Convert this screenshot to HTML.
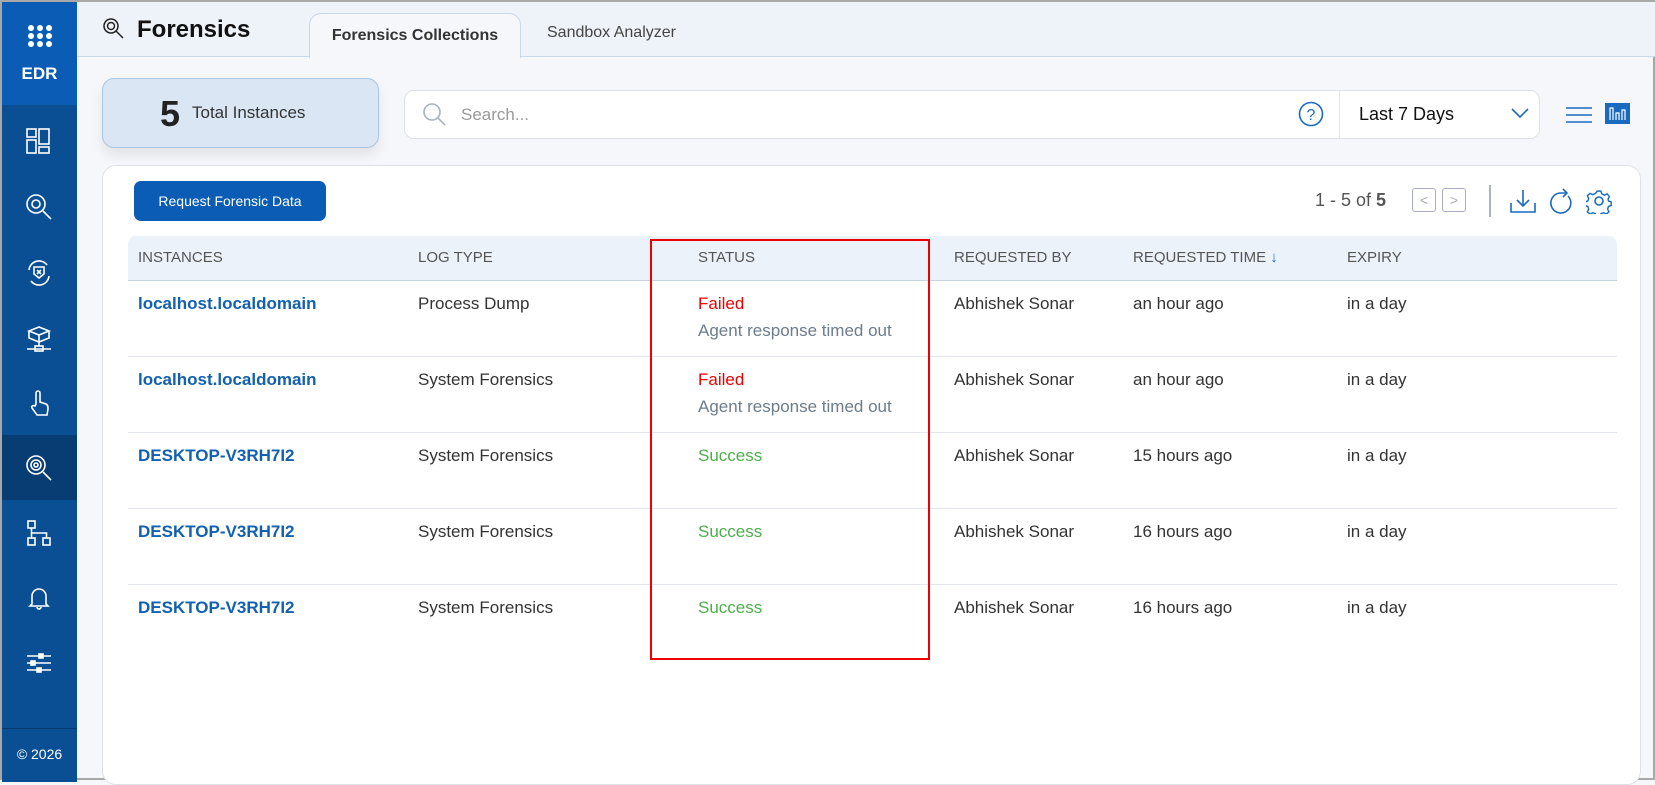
<!DOCTYPE html>
<html><head><meta charset="utf-8"><style>
*{box-sizing:border-box;margin:0;padding:0}
body{width:1655px;height:780px;overflow:hidden;background:#f5f7fa;font-family:"Liberation Sans",sans-serif;position:relative;border:2px solid #a8a8a8}
.abs{position:absolute}
.side{left:0;top:0;width:75px;height:780px;background:#0a4f93}
.edr{left:0;top:0;width:75px;height:103px;background:#0a5cb5;color:#fff;font-weight:bold;font-size:17px;text-align:center}
.ico{left:22px;width:30px;height:30px}
.foot{left:0;top:726px;width:75px;height:54px;border-top:1px solid #0a3a70;color:#fff;font-size:14px;text-align:center;line-height:50px}
.hdr{left:75px;top:0;width:1580px;height:55px;background:#eef3f9;border-bottom:1px solid #c9d8ea}
.tab{left:307px;top:11px;width:212px;height:45px;background:#f5f7fa;border:1px solid #c9d8ea;border-bottom:none;border-radius:12px 12px 0 0;font-weight:bold;font-size:16px;color:#333;text-align:center;line-height:44px}
.row{position:absolute;left:126px;width:1489px;height:76px;border-bottom:1px solid #e3e7ec;font-size:17px;color:#333}
.row span{position:absolute;top:13px}
.c1{left:10px;color:#1260b0;font-weight:bold}.c2{left:290px}.c3{left:570px}.c4{left:826px}.c5{left:1005px}.c6{left:1219px}
.sub{top:40px!important;color:#6b7c8c}
</style></head><body>
<div class="abs side"></div>
<div class="abs edr"><svg class="abs" style="left:25px;top:22px" width="26" height="24"><g fill="#fff"><circle cx="4" cy="4" r="3"/><circle cx="13" cy="4" r="3"/><circle cx="22" cy="4" r="3"/><circle cx="4" cy="12" r="3"/><circle cx="13" cy="12" r="3"/><circle cx="22" cy="12" r="3"/><circle cx="4" cy="20" r="3"/><circle cx="13" cy="20" r="3"/><circle cx="22" cy="20" r="3"/></g></svg><div class="abs" style="left:0;width:75px;top:62px">EDR</div></div>
<svg class="abs ico" style="top:124px" viewBox="0 0 30 30" fill="none" stroke="#fff" stroke-width="1.6"><rect x="3" y="3" width="9" height="8"/><rect x="3" y="14" width="9" height="13"/><rect x="15" y="3" width="10" height="15"/><rect x="15" y="21" width="10" height="6"/></svg>
<svg class="abs ico" style="top:190px" viewBox="0 0 30 30" fill="none" stroke="#fff" stroke-width="1.6"><circle cx="12" cy="12" r="9"/><circle cx="12" cy="12" r="4"/><path d="M19 19l8 8"/></svg>
<svg class="abs ico" style="top:256px" viewBox="0 0 30 30" fill="none" stroke="#fff" stroke-width="1.6"><path d="M5 12a10 10 0 0 1 18-5M25 18a10 10 0 0 1-18 5"/><path d="M10 9h10v7l-5 4-5-4z"/><path d="M13 12l4 4M17 12l-4 4"/></svg>
<svg class="abs ico" style="top:322px" viewBox="0 0 30 30" fill="none" stroke="#fff" stroke-width="1.6"><path d="M15 3l10 4-10 4-10-4z M5 7v7l10 4 10-4V7 M15 11v7 M15 18v4 M3 25h24"/><rect x="11" y="22" width="8" height="5"/></svg>
<svg class="abs ico" style="top:386px" viewBox="0 0 30 30" fill="none" stroke="#fff" stroke-width="1.6"><path d="M12 16V5a2 2 0 0 1 4 0v9l6 2c2 1 2 3 2 5l-1 6H13l-5-7c-1-2 1-3 3-2z"/></svg>
<div class="abs" style="left:0;top:433px;width:75px;height:65px;background:#083d73"></div>
<svg class="abs ico" style="top:451px" viewBox="0 0 30 30" fill="none" stroke="#fff" stroke-width="1.6"><circle cx="12" cy="12" r="9"/><circle cx="12" cy="12" r="5"/><circle cx="12" cy="12" r="2"/><path d="M19 19l8 8"/></svg>
<svg class="abs ico" style="top:516px" viewBox="0 0 30 30" fill="none" stroke="#fff" stroke-width="1.6"><rect x="4" y="3" width="7" height="7"/><rect x="4" y="20" width="7" height="7"/><rect x="19" y="20" width="7" height="7"/><path d="M7.5 10v10M7.5 15h15v5"/></svg>
<svg class="abs ico" style="top:580px" viewBox="0 0 30 30" fill="none" stroke="#fff" stroke-width="1.6"><path d="M8 22V14a7 7 0 0 1 14 0v8l2 2H6z M13 25a2 2 0 0 0 4 0"/></svg>
<svg class="abs ico" style="top:646px" viewBox="0 0 30 30" fill="#fff" stroke="#fff" stroke-width="1.6"><path d="M3 8h24M3 15h24M3 22h24"/><rect x="15" y="6" width="4" height="4"/><rect x="7" y="13" width="4" height="4"/><rect x="13" y="20" width="4" height="4"/></svg>
<div class="abs foot">© 2026</div>
<div class="abs hdr"></div>
<svg class="abs" style="left:100px;top:15px" width="24" height="24" viewBox="0 0 24 24" fill="none" stroke="#222" stroke-width="1.5"><circle cx="9" cy="9" r="7"/><circle cx="9" cy="9" r="3.5"/><path d="M14 14l7 7"/></svg>
<div class="abs" style="left:135px;top:14px;font-size:24px;font-weight:bold;color:#111">Forensics</div>
<div class="abs tab">Forensics Collections</div>
<div class="abs" style="left:545px;top:22px;font-size:16px;color:#444">Sandbox Analyzer</div>
<div class="abs" style="left:100px;top:76px;width:277px;height:70px;background:#dae6f3;border:1px solid #a9c6e5;border-radius:12px;box-shadow:0 8px 12px rgba(0,0,0,.08)"><span class="abs" style="left:57px;top:14px;font-size:36px;font-weight:bold;color:#222">5</span><span class="abs" style="left:89px;top:24px;font-size:17px;color:#333">Total Instances</span></div>
<div class="abs" style="left:402px;top:88px;width:1136px;height:49px;background:#fff;border:1px solid #dde2e8;border-radius:10px"></div>
<svg class="abs" style="left:419px;top:99px" width="26" height="26" fill="none" stroke="#aab3bd" stroke-width="1.6"><circle cx="11" cy="11" r="8"/><path d="M17 17l7 7"/></svg>
<div class="abs" style="left:459px;top:103px;font-size:17px;color:#999">Search...</div>
<svg class="abs" style="left:1296px;top:99px" width="26" height="26" fill="none" stroke="#1a6bc0" stroke-width="1.6"><circle cx="13" cy="13" r="11.5"/><text x="13" y="19" text-anchor="middle" font-size="16" fill="#1a6bc0" stroke="none" font-family="Liberation Sans">?</text></svg>
<div class="abs" style="left:1337px;top:89px;width:1px;height:47px;background:#e3e7ec"></div>
<div class="abs" style="left:1357px;top:102px;font-size:18px;color:#111">Last 7 Days</div>
<svg class="abs" style="left:1509px;top:105px" width="18" height="12" fill="none" stroke="#1a6bc0" stroke-width="1.6"><path d="M1 2l8 8 8-8"/></svg>
<svg class="abs" style="left:1564px;top:104px" width="26" height="18" stroke="#1a6bc0" stroke-width="1.6"><path d="M0 2h26M0 9h26M0 16h26"/></svg>
<svg class="abs" style="left:1603px;top:101px" width="25" height="21"><rect width="25" height="21" fill="#1a6bc0"/><path d="M5 17V5h3v12M11 17V10h3v7M17 17V7h3v10" stroke="#fff" stroke-width="1.2" fill="none"/></svg>
<div class="abs" style="left:100px;top:163px;width:1539px;height:620px;background:#fff;border:1px solid #dde2e8;border-radius:14px"></div>
<div class="abs" style="left:132px;top:179px;width:192px;height:40px;background:#0a5cb5;border-radius:7px;color:#fff;font-size:14px;text-align:center;line-height:40px">Request Forensic Data</div>
<div class="abs" style="left:1313px;top:188px;font-size:18px;color:#555">1 - 5 of <b>5</b></div>
<div class="abs" style="left:1410px;top:186px;width:24px;height:24px;border:1px solid #aac;border-radius:3px;color:#aab;font-size:14px;text-align:center;line-height:22px">&lt;</div>
<div class="abs" style="left:1440px;top:186px;width:24px;height:24px;border:1px solid #aac;border-radius:3px;color:#aab;font-size:14px;text-align:center;line-height:22px">&gt;</div>
<div class="abs" style="left:1487px;top:183px;width:2px;height:32px;background:#aab4bf"></div>
<svg class="abs" style="left:1508px;top:186px" width="26" height="26" fill="none" stroke="#1a6bc0" stroke-width="1.6"><path d="M1 15v9h24v-9M13 2v16M7 12l6 6 6-6"/></svg>
<svg class="abs" style="left:1546px;top:186px" width="26" height="28" fill="none" stroke="#1a6bc0" stroke-width="1.6"><path d="M20 8a10 10 0 1 1-8-3h6M15 1l4 4-4 4"/></svg>
<svg class="abs" style="left:1584px;top:186px" width="26" height="26" viewBox="0 0 26 26" fill="none" stroke="#1a6bc0" stroke-width="1.6"><circle cx="13" cy="13" r="4"/><path d="M11 2h4l1 3 3 1.5 3-1.5 2.5 3-1.5 3 .5 2 3 1v4l-3 1-1 3 1.5 3-3 2.5-3-1.5-3 1-1 3h-4l-1-3-3-1-3 1.5-3-2.5 1.5-3-1-3-3-1v-4l3-1 1-3-1.5-3 3-2.5 3 1.5 3-1.5z" transform="scale(.9) translate(1.5 1.5)"/></svg>
<div class="abs" style="left:126px;top:234px;width:1489px;height:45px;background:#ecf2f9;border-bottom:1px solid #c4d3e4;border-radius:8px 8px 0 0;font-size:15px;color:#555">
<span class="abs" style="left:10px;top:13px">INSTANCES</span><span class="abs" style="left:290px;top:13px">LOG TYPE</span><span class="abs" style="left:570px;top:13px">STATUS</span><span class="abs" style="left:826px;top:13px">REQUESTED BY</span><span class="abs" style="left:1005px;top:13px">REQUESTED TIME <span style="color:#1a6bc0">↓</span></span><span class="abs" style="left:1219px;top:13px">EXPIRY</span></div>
<div class="row" style="top:279px"><span class="c1">localhost.localdomain</span><span class="c2">Process Dump</span><span class="c3" style="color:#e00">Failed</span><span class="c3 sub">Agent response timed out</span><span class="c4">Abhishek Sonar</span><span class="c5">an hour ago</span><span class="c6">in a day</span></div>
<div class="row" style="top:355px"><span class="c1">localhost.localdomain</span><span class="c2">System Forensics</span><span class="c3" style="color:#e00">Failed</span><span class="c3 sub">Agent response timed out</span><span class="c4">Abhishek Sonar</span><span class="c5">an hour ago</span><span class="c6">in a day</span></div>
<div class="row" style="top:431px"><span class="c1">DESKTOP-V3RH7I2</span><span class="c2">System Forensics</span><span class="c3" style="color:#4cae4c">Success</span><span class="c4">Abhishek Sonar</span><span class="c5">15 hours ago</span><span class="c6">in a day</span></div>
<div class="row" style="top:507px"><span class="c1">DESKTOP-V3RH7I2</span><span class="c2">System Forensics</span><span class="c3" style="color:#4cae4c">Success</span><span class="c4">Abhishek Sonar</span><span class="c5">16 hours ago</span><span class="c6">in a day</span></div>
<div class="row" style="top:583px;border-bottom:none"><span class="c1">DESKTOP-V3RH7I2</span><span class="c2">System Forensics</span><span class="c3" style="color:#4cae4c">Success</span><span class="c4">Abhishek Sonar</span><span class="c5">16 hours ago</span><span class="c6">in a day</span></div>
<div class="abs" style="left:648px;top:237px;width:280px;height:421px;border:2px solid #e00"></div>
</body></html>
